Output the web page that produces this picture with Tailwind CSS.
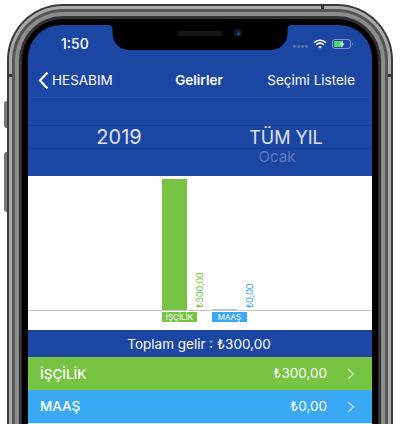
<!DOCTYPE html>
<html lang="en">
  <head>
    <meta charset="UTF-8" />
    <title>Gelirler</title>
    <script src="https://cdn.jsdelivr.net/npm/@tailwindcss/browser@4"></script>
  </head>
  <body class="bg-white overflow-hidden font-['Inter','Liberation_Sans',sans-serif]">
    <div class="relative w-[400px] h-[424px] overflow-hidden">
      <!-- side buttons -->
      <div class="absolute left-[4px] top-[101px] w-[3px] h-[27px] rounded-l-sm bg-[#777]"></div>
      <div class="absolute left-[4px] top-[152px] w-[3px] h-[60px] rounded-l-sm bg-[#777]"></div>
      <!-- frame -->
      <div class="absolute left-[7px] top-[4px] w-[386px] h-[520px] rounded-[56px] bg-[#3a3a3a] p-[2px]">
        <div class="h-full rounded-[54px] bg-[#a8a8a8] p-[3px]">
          <div class="h-full rounded-[51px] bg-[#555] p-[3px]">
            <div class="h-full rounded-[48px] bg-[#8c8c8c] p-[4px]">
              <div class="h-full rounded-[44px] bg-[#333] p-[3px]">
                <div class="relative h-full rounded-[41px] bg-black p-[6px]">
                  <!-- screen -->
                  <div class="relative h-full rounded-[33px] overflow-hidden bg-[#1b46a3] text-white">
                    <!-- notch -->
                    <svg class="absolute left-[80px] top-0" width="184" height="25" viewBox="0 0 184 25">
                      <path d="M0 0C3 0 4.500 1 4.500 5V8C4.500 18 12 25 22 25H162C172 25 179.500 18 179.500 8V5C179.500 1 181 0 184 0Z" fill="black" />
                    </svg>
                    <div class="absolute left-[150px] top-[6px] w-[44px] h-[5px] rounded-full bg-[#161616]"></div>
                    <div class="absolute left-[206px] top-[4px] w-[8px] h-[8px] rounded-full bg-[#111a2c] flex items-center justify-center">
                      <div class="w-[3px] h-[3px] rounded-full bg-[#1f4a80]"></div>
                    </div>

                    <div class="flex items-center justify-between h-[32px] pt-[6px] pl-[33px] pr-[18px] text-[14px] font-medium">
                      <span class="leading-none">1:50</span>
                      <div class="flex items-center gap-[5px]">
                        <div class="flex gap-[1px] mt-[5px]">
                          <span class="w-[3px] h-[3px] rounded-full bg-white/25"></span>
                          <span class="w-[3px] h-[3px] rounded-full bg-white/25"></span>
                          <span class="w-[3px] h-[3px] rounded-full bg-white/25"></span>
                          <span class="w-[3px] h-[3px] rounded-full bg-white/25"></span>
                        </div>
                        <svg width="14" height="10" viewBox="0 0 14 10" fill="none" stroke="white" stroke-width="1.6">
                          <path d="M1 3.6C4.4.5 9.6.5 13 3.6" />
                          <path d="M3.2 5.8C5.4 3.9 8.6 3.900 10.8 5.8" />
                          <path d="M7 9.6 5.2 7.7C6.2 6.9 7.8 6.9 8.8 7.7Z" fill="white" stroke="none" />
                        </svg>
                        <svg width="22" height="10" viewBox="0 0 22 10">
                          <rect x="0.5" y="0.5" width="18" height="9" rx="2.5" fill="none" stroke="white" stroke-opacity="0.45" />
                          <rect x="2" y="2" width="9" height="6" rx="1" fill="#4cd964" />
                          <path d="M20 3.500c1 .3 1 2.700 0 3z" fill="white" fill-opacity="0.5" />
                          <path d="M11 1 7.500 5.500h2.500L9 9l3.500-4.500H10z" fill="white" />
                        </svg>
                      </div>
                    </div>

                    <!-- nav -->
                    <div class="relative flex items-center justify-between h-[41px] pt-[6px] pl-[10px] pr-[17px] text-[13.5px] border-b border-white/5">
                      <div class="flex items-center gap-[3px]">
                        <svg width="11" height="19" viewBox="0 0 11 19" fill="none" stroke="white" stroke-width="2.200">
                          <path d="M9.500 1.500 2 9.500l7.500 8" />
                        </svg>
                        <span>HESABIM</span>
                      </div>
                      <span class="absolute left-0 right-0 pr-[2px] text-center font-semibold pointer-events-none">Gelirler</span>
                      <span>Seçimi Listele</span>
                    </div>

                    <!-- year picker -->
                    <div class="h-[78px] relative">
                      <div class="absolute left-0 right-0 top-[27px] h-[24px] border-y border-black/10 flex text-white/85">
                        <div class="w-[182px] text-center text-[20px] leading-[23px]">2019</div>
                        <div class="flex-1 pr-[10px] text-center text-[18px] leading-[23px]">TÜM YIL</div>
                      </div>
                      <div class="absolute top-[50px] left-[182px] right-[28px] text-center text-[15px] leading-[17px] text-white/30">Ocak</div>
                    </div>

                    <!-- chart -->
                    <div class="relative h-[154px] bg-white">
                      <div class="absolute left-0 right-0 top-[134px] h-px bg-[#c4c4c4]"></div>
                      <div class="absolute left-[134px] top-[3px] w-[25px] h-[131px] bg-[#76c442]"></div>
                      <div class="absolute left-[184px] top-[133px] w-[25px] h-px bg-[#9dd3f8]"></div>
                      <div class="absolute left-[134px] top-[136px] w-[35px] h-[10px] bg-[#76c442] text-white text-[8px] leading-[10px] text-center">İŞÇİLİK</div>
                      <div class="absolute left-[184px] top-[136px] w-[35px] h-[10px] bg-[#3aa9f5] text-white text-[8px] leading-[10px] text-center">MAAŞ</div>
                      <div class="absolute left-[167px] top-[96px] h-[36px] [writing-mode:vertical-rl] rotate-180 text-[9px] leading-[10px] text-[#76c442]">₺300,00</div>
                      <div class="absolute left-[217px] top-[107px] h-[25px] [writing-mode:vertical-rl] rotate-180 text-[9px] leading-[10px] text-[#3aa9f5]">₺0,00</div>
                    </div>

                    <div class="h-[27px] flex items-center justify-center pt-[1px] pr-[2px] text-[13.5px]">Toplam gelir : ₺300,00</div>

                    <div class="h-[33px] bg-[#76c442] flex items-center pl-[12px] pr-[17px] text-[13.5px]">
                      <span class="flex-1 font-medium pt-[1px]">İŞÇİLİK</span>
                      <span class="mr-[20px]">₺300,00</span>
                      <svg width="8" height="12" viewBox="0 0 8 12" fill="none" stroke="white" stroke-opacity="0.6" stroke-width="1.500"><path d="M1 1l5.500 5L1 11" /></svg>
                    </div>
                    <div class="h-[33px] bg-[#3aa9f5] flex items-center pl-[12px] pr-[17px] text-[13.5px]">
                      <span class="flex-1 font-medium">MAAŞ</span>
                      <span class="mr-[20px]">₺0,00</span>
                      <svg width="8" height="12" viewBox="0 0 8 12" fill="none" stroke="white" stroke-opacity="0.6" stroke-width="1.500"><path d="M1 1l5.500 5L1 11" /></svg>
                    </div>
                    <div class="h-px bg-[#d8ecfb]"></div>
                  </div>
                </div>
              </div>
            </div>
          </div>
        </div>
      </div>
      <!-- antenna bands on the frame -->
      <div class="absolute left-[7px] top-[74px] w-[5px] h-[3px] bg-[#333]"></div>
      <div class="absolute right-[7px] top-[74px] w-[5px] h-[3px] bg-[#333]"></div>
      <div class="absolute left-[321px] top-[4px] w-[3px] h-[5px] bg-[#333]"></div>
    </div>
  </body>
</html>
